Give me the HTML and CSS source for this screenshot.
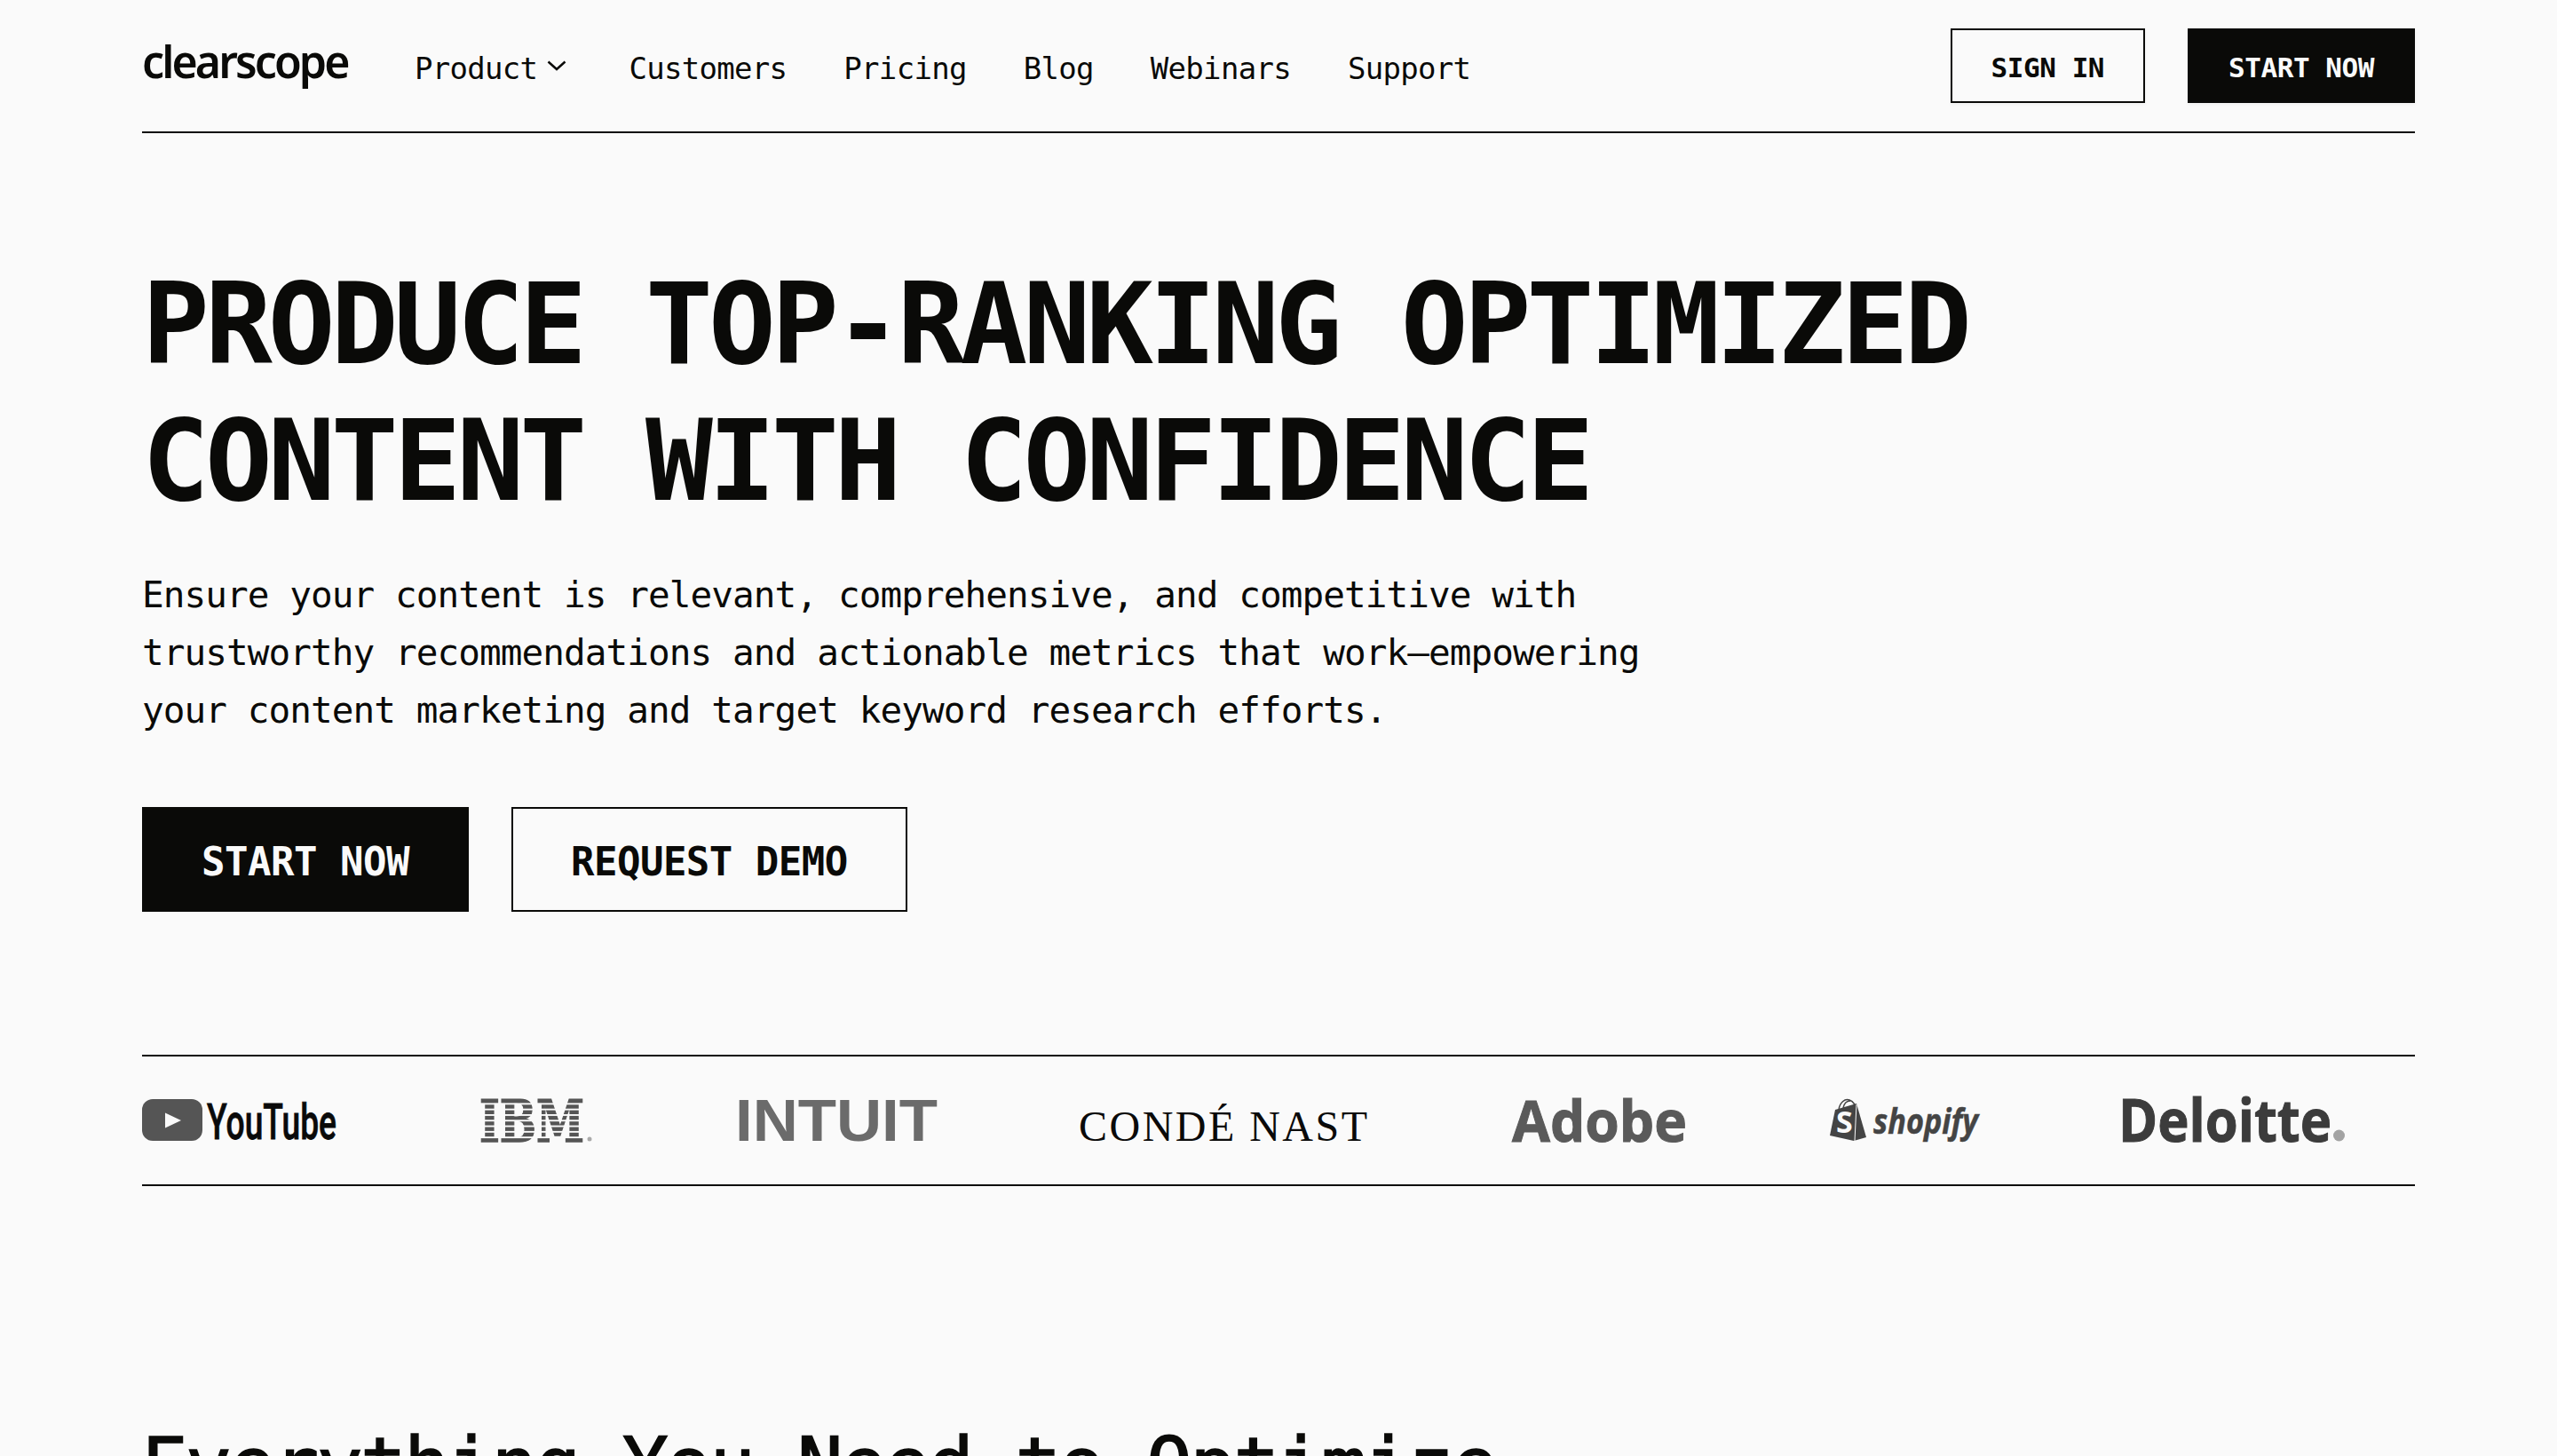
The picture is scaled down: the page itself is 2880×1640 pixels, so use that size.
FILE: index.html
```html
<!DOCTYPE html>
<html lang="en">
<head>
<meta charset="utf-8">
<title>Clearscope</title>
<link rel="stylesheet" href="styles.css">
</head>
<body>
<div class="page">
  <header class="topbar">
    <a class="brand" href="#">clearscope</a>
    <nav class="mainnav">
      <a class="navlink navlink-menu" href="#">Product
        <svg class="chevron" width="22" height="12" viewBox="0 0 22 12"><path d="M1.5 1.5 L11 10 L20.500 1.500"/></svg>
      </a>
      <a class="navlink" href="#">Customers</a>
      <a class="navlink" href="#">Pricing</a>
      <a class="navlink" href="#">Blog</a>
      <a class="navlink" href="#">Webinars</a>
      <a class="navlink" href="#">Support</a>
    </nav>
    <div class="actions">
      <a class="btn btn-small btn-outline" href="#">SIGN IN</a>
      <a class="btn btn-small btn-solid" href="#">START NOW</a>
    </div>
  </header>

  <section class="hero">
    <h1 class="headline">PRODUCE TOP-RANKING OPTIMIZED<br>CONTENT WITH CONFIDENCE</h1>
    <p class="lede">Ensure your content is relevant, comprehensive, and competitive with<br>trustworthy recommendations and actionable metrics that work—empowering<br>your content marketing and target keyword research efforts.</p>
    <div class="cta">
      <a class="btn btn-large btn-solid" href="#">START NOW</a>
      <a class="btn btn-large btn-outline" href="#">REQUEST DEMO</a>
    </div>
  </section>

  <section class="logos">
    <svg width="219" height="48" viewBox="0 0 219 48">
      <rect x="0" y="0" width="68" height="47" rx="12" class="fill-yt"/>
      <path d="M26 15.500 L44 24 L26 32.500 Z" class="fill-bg"/>
      <text x="73" y="45" textLength="146" lengthAdjust="spacingAndGlyphs" class="logo-yt">YouTube</text>
    </svg>
    <svg width="127" height="48" viewBox="0 0 127 48">
      <text x="0" y="47.500" textLength="118" lengthAdjust="spacingAndGlyphs" class="logo-ibm">IBM</text>
      <g class="fill-bg">
        <rect x="-2" y="4.400" width="124" height="1.900"/>
        <rect x="-2" y="10.700" width="124" height="1.900"/>
        <rect x="-2" y="17" width="124" height="1.900"/>
        <rect x="-2" y="23.300" width="124" height="1.900"/>
        <rect x="-2" y="29.600" width="124" height="1.900"/>
        <rect x="-2" y="35.900" width="124" height="1.900"/>
        <rect x="-2" y="42.200" width="124" height="1.900"/>
      </g>
      <circle cx="124" cy="45" r="2.500" class="fill-ibmr"/>
    </svg>
    <svg width="228" height="48" viewBox="0 0 228 48">
      <text x="0" y="47" textLength="228" lengthAdjust="spacingAndGlyphs" class="logo-intuit">INTUIT</text>
    </svg>
    <svg width="325" height="48" viewBox="0 0 325 48">
      <text x="-2" y="47" textLength="325" lengthAdjust="spacing" class="logo-conde">CONDÉ NAST</text>
    </svg>
    <svg width="197" height="48" viewBox="0 0 197 48">
      <text x="0" y="47.500" textLength="197" lengthAdjust="spacingAndGlyphs" class="logo-adobe">Adobe</text>
    </svg>
    <svg width="167" height="48" viewBox="0 0 167 48">
      <path d="M0 41 L6 12 L30 5 L41 43 L27 47 Z" class="fill-shop"/>
      <path d="M10 12 C11 4 17 -1 22 1 C27 3 29 8 29 12 M15 10 C16 5 19 2 23 2" class="stroke-shop"/>
      <path d="M30 6 L28 47" class="stroke-bag"/>
      <text x="7" y="38" class="logo-bag">S</text>
      <text x="49" y="39" textLength="118" lengthAdjust="spacingAndGlyphs" class="logo-shopify">shopify</text>
    </svg>
    <svg width="252" height="48" viewBox="0 0 252 48">
      <text x="-3" y="47.500" textLength="240" lengthAdjust="spacingAndGlyphs" class="logo-deloitte">Deloitte</text>
      <circle cx="245.500" cy="41" r="6.500" class="fill-dot"/>
    </svg>
  </section>

  <section class="features">
    <h2 class="subhead">Everything You Need to Optimize</h2>
  </section>
</div>
</body>
</html>
```
FILE: styles.css
```css
html, body {
  margin: 0;
  padding: 0;
  height: 1640px;
  overflow: hidden;
  background: #fafafa;
}

body {
  color: #0a0a08;
  font-family: "DejaVu Sans Mono", "Liberation Mono", monospace;
}

a {
  color: inherit;
  text-decoration: none;
}

.page {
  padding: 0 160px;
}

.topbar {
  display: flex;
  align-items: center;
  height: 148px;
  border-bottom: 2px solid #0a0a08;
}

.brand {
  font-family: "Noto Sans", "Open Sans", sans-serif;
  font-weight: 600;
  font-size: 50px;
  line-height: 1;
  letter-spacing: -2.900px;
  width: 307px;
  flex: none;
  margin-top: -10px;
}

.mainnav {
  display: flex;
  align-items: center;
  gap: 64px;
  flex: 1;
  margin-top: 6px;
}

.navlink {
  display: flex;
  align-items: center;
  font-size: 34px;
  line-height: 40px;
  letter-spacing: -0.700px;
  white-space: nowrap;
}

.navlink-menu {
  gap: 11px;
  margin-right: 6px;
}

.chevron {
  fill: none;
  stroke: #0a0a08;
  stroke-width: 2.500;
  margin-top: -6px;
}

.actions {
  display: flex;
  gap: 48px;
}

.btn {
  display: flex;
  align-items: center;
  justify-content: center;
  box-sizing: border-box;
  font-weight: 700;
  border: 2px solid #0a0a08;
  white-space: nowrap;
}

.btn-small {
  height: 84px;
  padding: 3px 44px 0;
  font-size: 31px;
  letter-spacing: -0.450px;
  box-shadow: 0 2px 4px rgba(0, 0, 0, 0.04);
}

.btn-large {
  height: 118px;
  padding: 5px 65px 0;
  font-size: 44px;
  letter-spacing: -0.500px;
}

.btn-solid {
  background: #0a0a08;
  color: #fafafa;
}

.btn-outline {
  background: #fafafa;
  color: #0a0a08;
}

.hero {
  padding-top: 139px;
}

.headline {
  margin: 0;
  font-size: 126px;
  font-weight: 700;
  line-height: 154px;
  letter-spacing: -4.970px;
  white-space: nowrap;
}

.lede {
  margin: 41px 0 0;
  font-size: 41px;
  line-height: 65px;
  letter-spacing: -0.930px;
  white-space: nowrap;
}

.cta {
  display: flex;
  gap: 48px;
  margin-top: 76px;
}

.logos {
  display: flex;
  align-items: center;
  gap: 161px;
  height: 144px;
  margin-top: 161px;
  border-top: 2px solid #0a0a08;
  border-bottom: 2px solid #0a0a08;
}

.logos svg {
  flex: none;
  overflow: visible;
}

.fill-bg { fill: #fafafa; }
.fill-yt { fill: #555555; }
.fill-ibmr { fill: #aaaaaa; }
.fill-shop { fill: #444444; }
.fill-dot { fill: #a3a3a3; }

.stroke-shop {
  fill: none;
  stroke: #444444;
  stroke-width: 1.500;
}

.stroke-bag {
  fill: none;
  stroke: #fafafa;
  stroke-width: 1;
}

.logo-yt {
  font-family: "Roboto", sans-serif;
  font-weight: 500;
  font-size: 56px;
  fill: #0a0a0a;
  stroke: #0a0a0a;
  stroke-width: 0.800;
}

.logo-ibm {
  font-family: "DejaVu Serif", serif;
  font-weight: 700;
  font-size: 66px;
  fill: #555555;
  stroke: #555555;
  stroke-width: 1.500;
}

.logo-intuit {
  font-family: "Liberation Sans", sans-serif;
  font-weight: 700;
  font-size: 67px;
  fill: #6b6b6b;
}

.logo-conde {
  font-family: "Liberation Serif", serif;
  font-size: 48px;
  fill: #0a0a0a;
}

.logo-adobe {
  font-family: "Open Sans", sans-serif;
  font-weight: 700;
  font-size: 64px;
  fill: #5a5a5a;
  stroke: #5a5a5a;
  stroke-width: 1;
}

.logo-bag {
  font-family: "Open Sans", sans-serif;
  font-weight: 700;
  font-size: 34px;
  fill: #fafafa;
}

.logo-shopify {
  font-family: "Open Sans", sans-serif;
  font-weight: 700;
  font-style: italic;
  font-size: 40px;
  fill: #444444;
  stroke: #444444;
  stroke-width: 0.500;
}

.logo-deloitte {
  font-family: "Open Sans", sans-serif;
  font-weight: 700;
  font-size: 66px;
  fill: #3c3c3c;
  stroke: #3c3c3c;
  stroke-width: 1;
}

.features {
  padding-top: 264px;
}

.subhead {
  margin: 0;
  font-size: 86px;
  font-weight: 400;
  line-height: 100px;
  letter-spacing: -2.600px;
  -webkit-text-stroke: 1.500px #0a0a08;
  white-space: nowrap;
}
```
